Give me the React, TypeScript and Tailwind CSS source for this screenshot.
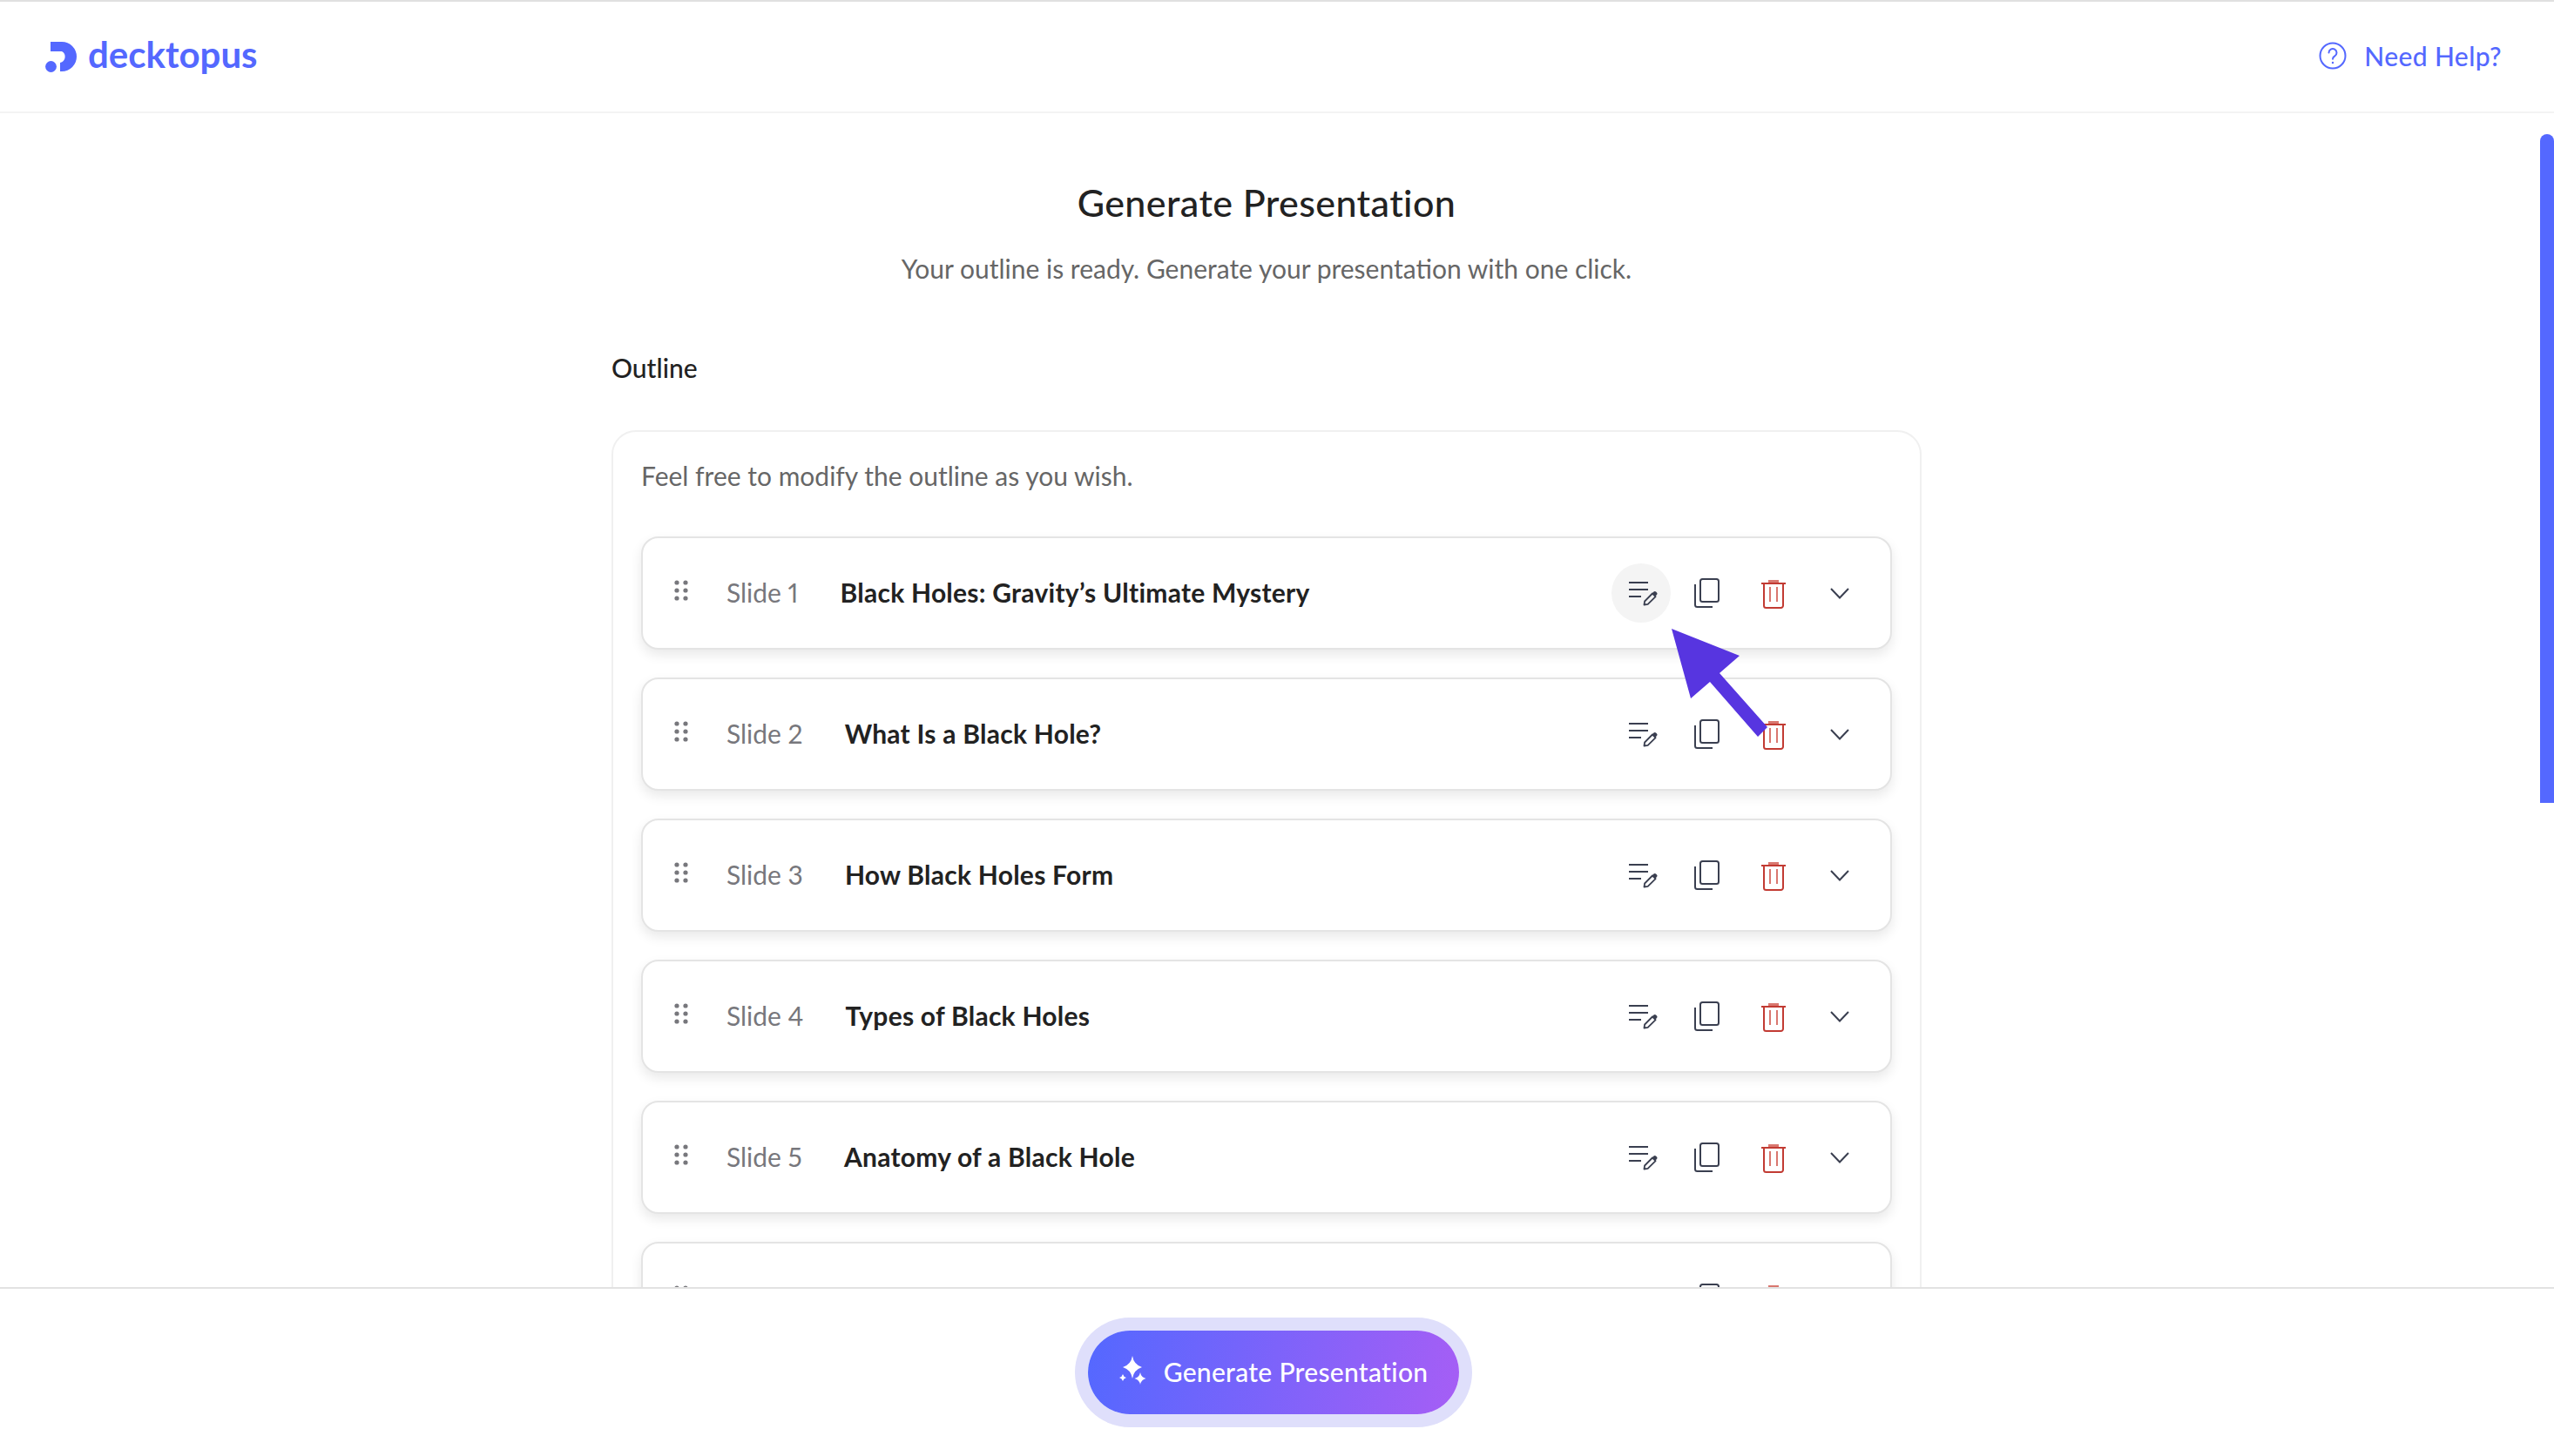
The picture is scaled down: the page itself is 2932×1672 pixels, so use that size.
const slides = [
  { label: 'Slide 1', title: 'Black Holes: Gravity’s Ultimate Mystery' },
  { label: 'Slide 2', title: 'What Is a Black Hole?' },
  { label: 'Slide 3', title: 'How Black Holes Form' },
  { label: 'Slide 4', title: 'Types of Black Holes' },
  { label: 'Slide 5', title: 'Anatomy of a Black Hole' },
  { label: '', title: '' }, // only the top edge of this row shows above the footer
];

function Logo() {
  return (
    <svg width="38" height="36" viewBox="0 0 38 36" fill="#5468ff">
      <path d="M7 1H20A17 17 0 0 1 20 35H18V25A7 7 0 0 0 20 12H7Z" />
      <circle cx="7.5" cy="29.5" r="6.4" />
    </svg>
  );
}

function HelpIcon() {
  return (
    <svg width="32" height="32" viewBox="0 0 32 32" fill="none" stroke="#5468ff" strokeWidth="2">
      <circle cx="16" cy="16" r="14.5" />
      <path d="M11.5 12.5a4.5 4.5 0 1 1 6.8 3.9c-1.4.8-2.3 1.6-2.3 3.3" strokeLinecap="round" />
      <circle cx="16" cy="24" r="1.2" fill="#5468ff" stroke="none" />
    </svg>
  );
}

function DragDots() {
  return (
    <svg width="16" height="24" viewBox="0 0 16 24" fill="#77777c" className="mt-[-7px]">
      {[3, 12, 21].map((y) => (
        <g key={y}>
          <circle cx="3" cy={y} r="2.6" />
          <circle cx="13" cy={y} r="2.6" />
        </g>
      ))}
    </svg>
  );
}

function EditIcon() {
  return (
    <svg width="40" height="40" viewBox="0 0 40 40" fill="none" stroke="#3a3f50" strokeWidth="2">
      <path d="M6 8H28M6 16H28M6 24H20" />
      <path d="M23.5 33.5l.6-4L33 20.5l3.6 3.6-8.9 8.8z" strokeWidth="1.8" strokeLinejoin="round" />
      <path d="M32.5 20.5l2-2a1.8 1.8 0 0 1 2.5 0l1 1a1.8 1.8 0 0 1 0 2.5l-2 2z" fill="#3a3f50" stroke="none" />
    </svg>
  );
}

function CopyIcon() {
  return (
    <svg width="40" height="40" viewBox="0 0 40 40" fill="none" stroke="#3a3f50" strokeWidth="2">
      <rect x="12" y="4" width="21" height="26" rx="2.5" />
      <path d="M6 10V33.5A2.5 2.5 0 0 0 8.500 36H26" />
    </svg>
  );
}

function TrashIcon() {
  return (
    <svg width="40" height="40" viewBox="0 0 40 40" fill="none" stroke="#c23b33" strokeWidth="2">
      <path d="M14 6.500H26" stroke="#d9776f" strokeWidth="3" />
      <path d="M6 9H34" />
      <path d="M9 9V34.500A2.500 2.500 0 0 0 11.500 37H28.500A2.500 2.500 0 0 0 31 34.500V9" />
      <path d="M16 13V30M24 13V30" stroke="#d9776f" />
    </svg>
  );
}

function ChevronIcon() {
  return (
    <svg width="40" height="40" viewBox="0 0 40 40" fill="none" stroke="#3a3f50" strokeWidth="2">
      <path d="M10 15L20 25.500L30 15" />
    </svg>
  );
}

function SparkleIcon() {
  return (
    <svg width="32" height="36" viewBox="0 0 32 36" fill="#fff">
      <path d="M15 0Q16.500 10 26 13Q16.500 16 15 26Q13.500 16 4 13Q13.500 10 15 0Z" />
      <path d="M24 19Q25 24.500 30.500 26Q25 27.500 24 33Q23 27.500 17.500 26Q23 24.500 24 19Z" />
      <path d="M4 21Q4.700 24 8 25Q4.700 26 4 29Q3.300 26 0 25Q3.300 24 4 21Z" />
    </svg>
  );
}

function SlideRow({ label, title, active }: { label: string; title: string; active: boolean }) {
  return (
    <div className="flex h-[130px] shrink-0 items-center rounded-[20px] border-2 border-[#e4e4e4] bg-white pl-[36px] pr-[24px] shadow-[0_6px_14px_rgba(0,0,0,0.09)]">
      <DragDots />
      <span className="ml-[44px] mr-[48px] mt-[-2px] text-[30px] text-[#77777c] [font-variant-numeric:proportional-nums]">{label}</span>
      <span className="mt-[-2px] flex-1 text-[30px] font-bold tracking-[0.25px] text-[#222222]">{title}</span>
      <div className="flex items-center gap-2">
        <div className={`flex h-[68px] w-[68px] items-center justify-center rounded-full ${active ? 'bg-[#f4f4f4]' : ''}`}>
          <EditIcon />
        </div>
        <div className="flex h-[68px] w-[68px] items-center justify-center">
          <CopyIcon />
        </div>
        <div className="flex h-[68px] w-[68px] items-center justify-center">
          <TrashIcon />
        </div>
        <div className="flex h-[68px] w-[68px] items-center justify-center">
          <ChevronIcon />
        </div>
      </div>
    </div>
  );
}

export default function App() {
  return (
    <div className="relative flex h-[1672px] w-full flex-col overflow-hidden bg-white font-['Lato',sans-serif]">
      <header className="flex h-[130px] shrink-0 items-center justify-between border-t-2 border-b-2 border-t-[#e0e0e0] border-b-[#f3f3f3] pl-[51px] pr-[60px]">
        <div className="flex items-center gap-[12px]">
          <Logo />
          <span className="mt-[-6px] text-[42px] font-bold leading-none text-[#5468ff]">decktopus</span>
        </div>
        <div className="mt-[-2px] flex items-center gap-[20px]">
          <HelpIcon />
          <span className="text-[30px] font-medium tracking-[0.4px] text-[#5468ff]">Need Help?</span>
        </div>
      </header>

      <main className="flex min-h-0 flex-1 flex-col items-center overflow-hidden pr-[24px]">
        <h1 className="mt-[79px] text-[43px] font-medium leading-[48px] tracking-[0.4px] text-[#222222]">Generate Presentation</h1>
        <p className="mt-[31px] text-[30px] leading-[40px] text-[#666666]">Your outline is ready. Generate your presentation with one click.</p>
        <div className="w-[1504px]">
          <h2 className="mt-[74px] text-[30px] font-medium leading-[40px] text-[#222222]">Outline</h2>
          <div className="mt-[52px] rounded-[28px] border-2 border-[#f0f0f0] px-[32px] pt-[30px] pb-[32px]">
            <p className="text-[30px] leading-[40px] text-[#666666]">Feel free to modify the outline as you wish.</p>
            <div className="mt-[50px] flex flex-col gap-[32px]">
              {slides.map((s, i) => (
                <SlideRow key={i} label={s.label} title={s.title} active={i === 0} />
              ))}
            </div>
          </div>
        </div>
      </main>

      <footer className="flex h-[194px] shrink-0 justify-center border-t-2 border-[#e2e2e2] bg-white pt-[48px] pr-[8px]">
        <button className="flex h-[96px] w-[426px] items-center justify-center gap-[19px] rounded-[48px] bg-[linear-gradient(100deg,#5468ff,#a65ef5)] pb-[2px] text-[30px] font-medium tracking-[0.3px] text-white ring-[15px] ring-[#dfdffb]">
          <SparkleIcon />
          Generate Presentation
        </button>
      </footer>

      <div className="absolute right-0 top-[154px] h-[768px] w-[16px] rounded-t-[8px] bg-[#5468ff]" />

      <svg className="absolute left-[1919px] top-[722px]" width="110" height="124" viewBox="1919 722 110 124" fill="#5735e0">
        <polygon points="1919,722 1997,753 1974,773 2029,835 2018,846 1963,783 1941,802" />
      </svg>
    </div>
  );
}
